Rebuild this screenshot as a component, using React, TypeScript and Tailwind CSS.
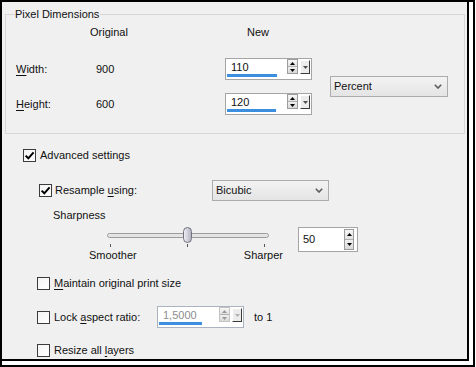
import type { ReactNode } from "react";

function U({ children }: { children: ReactNode }) {
  return <span className="underline underline-offset-[2px]">{children}</span>;
}

function Check({ checked = false }: { checked?: boolean }) {
  return (
    <div className="flex h-[13px] w-[13px] shrink-0 items-center justify-center border border-[#3c3c3c] bg-linear-to-br from-[#f4f4f4] to-white">
      {checked && (
        <svg width="11" height="11" viewBox="0 0 11 11">
          <path d="M1.6 5.6 L4.3 8.3 L9.6 2.3" stroke="#000" strokeWidth="2" fill="none" />
        </svg>
      )}
    </div>
  );
}

function Tri({ up = false, color = "#000" }: { up?: boolean; color?: string }) {
  return (
    <svg width="5" height="3" viewBox="0 0 5 3">
      <path d={up ? "M2.5 0 L5 3 L0 3 Z" : "M0 0 L5 0 L2.5 3 Z"} fill={color} />
    </svg>
  );
}

function UpDown({ tall = false, disabled = false }: { tall?: boolean; disabled?: boolean }) {
  const c = disabled ? "#9a9a9a" : "#000";
  return (
    <div
      className={`flex flex-col border ${
        disabled ? "border-[#c4c4c4]" : "border-[#9c9c9c]"
      } ${tall ? "h-[21px] w-[10px]" : "h-[15px] w-[11px]"}`}
    >
      <div className="flex flex-1 items-center justify-center border-b border-[#b0b0b0] bg-linear-to-b from-[#f7f7f7] to-[#e2e2e2]">
        <Tri up color={c} />
      </div>
      <div className="flex flex-1 items-center justify-center bg-linear-to-b from-[#f0f0f0] to-[#d9d9d9]">
        <Tri color={c} />
      </div>
    </div>
  );
}

function SpinField({ value, barClass, disabled = false }: { value: string; barClass: string; disabled?: boolean }) {
  return (
    <div className={`flex h-[22px] w-[87px] border bg-white ${disabled ? "border-[#aab4c0]" : "border-[#a5a5a5]"}`}>
      <div className="flex w-[60px] flex-col">
        <span className={`pl-[5px] pt-[2px] leading-[13px] ${disabled ? "text-[#8d8d8d]" : ""}`}>{value}</span>
        <div className={`mt-auto mb-[2px] ml-[1px] h-[3px] bg-[#3c8edf] ${barClass}`} />
      </div>
      <div className="ml-[1px]">
        <UpDown disabled={disabled} />
      </div>
      <div className="mt-[1px] ml-[2px] flex h-[14px] w-[10px] items-center justify-center border border-t-white border-l-white border-r-[#3a3a3a] border-b-[#3a3a3a] bg-[#ececec]">
        <Tri color={disabled ? "#b0b0b0" : "#505050"} />
      </div>
    </div>
  );
}

function Select({ label, w }: { label: string; w: string }) {
  return (
    <div className={`flex h-[21px] items-center justify-between border border-[#acacac] bg-linear-to-b from-[#f3f3f3] to-[#e4e4e4] pl-[3px] pr-[5px] ${w}`}>
      <span className="leading-[13px]">{label}</span>
      <svg width="8" height="5" viewBox="0 0 8 5">
        <path d="M0.8 0.8 L4 4 L7.2 0.8" stroke="#5c5c5c" strokeWidth="1.6" fill="none" />
      </svg>
    </div>
  );
}

export default function App() {
  return (
    <div className="h-[367px] w-[475px] border-2 border-black bg-white pr-[4px] pb-[4px] font-['Liberation_Sans',Arial,sans-serif] text-[11px] leading-[13px] text-[#111]">
      <div className="flex h-[359px] w-[467px] flex-col border-r-2 border-b-2 border-black bg-[#f0f0f0]">
        <fieldset className="mt-[6px] ml-[3px] h-[126px] w-[460px] border border-[#d7d7d7]">
          <legend className="ml-[9px] pr-[1px] leading-[13px]">Pixel Dimensions</legend>
          <div className="mt-[5px] flex h-[13px]">
            <span className="ml-[84px] w-[157px]">Original</span>
            <span>New</span>
          </div>
          <div className="mt-[19px] flex">
            <div className="flex flex-col">
              <div className="flex h-[22px] items-center">
                <span className="ml-[10px] w-[80px]">
                  <U>W</U>idth:
                </span>
                <span className="w-[129px]">900</span>
                <SpinField value="110" barClass="w-[50px]" />
              </div>
              <div className="mt-[13px] flex h-[22px] items-center">
                <span className="ml-[10px] w-[80px]">
                  <U>H</U>eight:
                </span>
                <span className="w-[129px]">600</span>
                <SpinField value="120" barClass="w-[49px]" />
              </div>
            </div>
            <div className="ml-[18px] self-center">
              <Select label="Percent" w="w-[118px]" />
            </div>
          </div>
        </fieldset>

        <div className="mt-[15px] flex h-[13px] items-center">
          <div className="ml-[21px]">
            <Check checked />
          </div>
          <span className="ml-[4px]">Advanced settings</span>
        </div>

        <div className="mt-[18px] flex h-[20px] items-center">
          <div className="ml-[37px]">
            <Check checked />
          </div>
          <span className="ml-[3px] w-[157px]">
            Resample <U>u</U>sing:
          </span>
          <Select label="Bicubic" w="w-[117px]" />
        </div>

        <span className="mt-[9px] ml-[51px]">Sharpness</span>

        <div className="mt-[5px] flex items-start">
          <div className="ml-[87px] flex w-[194px] flex-col">
            <div className="relative ml-[18px] flex h-[17px] w-[162px] items-center">
              <div className="h-[5px] w-full rounded-full border border-[#9c9c9c] bg-[#e4e4e4]" />
              <div className="absolute top-0 left-[76px] h-[16px] w-[9px] rounded-full border border-[#70707e] bg-linear-to-r from-[#eeeef4] to-[#b4b4c4]" />
            </div>
            <div className="flex h-[4px]">
              <div className="ml-[21px] h-[3px] w-px bg-[#555]" />
              <div className="ml-[76px] h-[3px] w-px bg-[#555]" />
              <div className="ml-[76px] h-[3px] w-px bg-[#555]" />
            </div>
            <div className="mt-[1px] flex justify-between">
              <span>Smoother</span>
              <span>Sharper</span>
            </div>
          </div>
          <div className="ml-[15px] flex h-[25px] w-[60px] items-center border border-[#a5a5a5] bg-white">
            <span className="w-[44px] pl-[4px]">50</span>
            <div className="ml-[1px]">
              <UpDown tall />
            </div>
          </div>
        </div>

        <div className="mt-[15px] flex h-[13px] items-center">
          <div className="ml-[35px]">
            <Check />
          </div>
          <span className="ml-[4px]">
            <U>M</U>aintain original print size
          </span>
        </div>

        <div className="mt-[16px] flex h-[22px] items-center">
          <div className="ml-[35px]">
            <Check />
          </div>
          <span className="ml-[4px] w-[103px]">
            Lock <U>a</U>spect ratio:
          </span>
          <SpinField value="1,5000" barClass="w-[43px]" disabled />
          <span className="ml-[10px]">to 1</span>
        </div>

        <div className="mt-[16px] flex h-[13px] items-center">
          <div className="ml-[35px]">
            <Check />
          </div>
          <span className="ml-[4px]">
            Resize all <U>l</U>ayers
          </span>
        </div>
      </div>
    </div>
  );
}
